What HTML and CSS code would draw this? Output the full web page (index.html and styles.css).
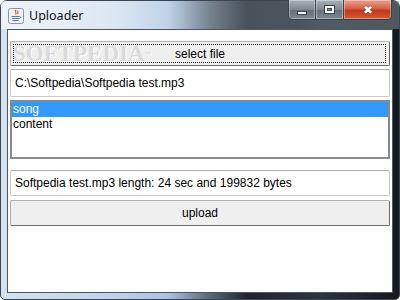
FILE: index.html
```html
<!doctype html>
<html lang="en">
<head>
<meta charset="utf-8">
<title>Uploader</title>
<link rel="stylesheet" href="styles.css">
</head>
<body>
<div class="win">
  <div class="titlebar">
    <svg class="appicon" width="16" height="16" viewBox="0 0 16 16">
      <rect x="0.5" y="0.5" width="15" height="15" rx="2" fill="#eef1f5" stroke="#8a97a8"/>
      <path d="M8 2c-2 1.5 1.5 2.5-.5 4.5M10 3c-1.2 1 .8 1.6-.4 3" stroke="#e0641c" stroke-width="1.3" fill="none"/>
      <path d="M3.5 8.5h8M4 10.5h7M4.5 12.5h6" stroke="#5577a8" stroke-width="1"/>
      <path d="M11.5 8.5c1.6 0 1.6 2-.5 2" stroke="#5577a8" fill="none"/>
    </svg>
    <span class="title">Uploader</span>
    <div class="caps">
      <div class="cap min"><span></span></div>
      <div class="cap max"><span></span></div>
      <div class="cap close">&#x2716;</div>
    </div>
  </div>
  <div class="client">
    <button class="btn focus"><span class="mark">SOFTPEDIA<sup>™</sup></span><span class="lbl">select file</span></button>
    <div class="field">C:\Softpedia\Softpedia test.mp3</div>
    <ul class="list">
      <li class="sel">song</li>
      <li>content</li>
    </ul>
    <div class="field info">Softpedia test.mp3 length: 24 sec and 199832 bytes</div>
    <button class="btn"><span class="lbl">upload</span></button>
  </div>
</div>
</body>
</html>
```

FILE: styles.css
```css
*{box-sizing:border-box}
body{margin:0;background:#fff;font-family:"Liberation Sans",Arial,sans-serif}
.win{width:400px;height:300px;display:flex;flex-direction:column;border-radius:7px 7px 5px 5px;
  background:linear-gradient(90deg,#d5e2ef 0%,#c2d5e9 25%,#a9c4e2 42%,#5d6b79 52%,#1e252d 62%,#2c343d 80%,#15191e 100%);
  border:1px solid #3c4650}
.titlebar{height:28px;display:flex;align-items:flex-start;
  background:linear-gradient(90deg,rgba(255,255,255,.6) 0%,rgba(255,255,255,.45) 30%,rgba(210,220,230,.25) 50%,rgba(120,130,140,.45) 75%,rgba(140,150,160,.5) 100%)}
.appicon{margin:7px 0 0 7px}
.title{margin:6px 0 0 5px;font-family:"Noto Sans","DejaVu Sans",sans-serif;font-size:12.5px;line-height:17px;color:#10131a}
.caps{margin-left:auto;margin-right:7px;display:flex;height:20px;margin-top:-1px;border:1px solid #3a4048;border-top:0;border-radius:0 0 5px 5px;overflow:hidden}
.cap{height:19px;display:flex;align-items:center;justify-content:center;
  background:linear-gradient(#a8b1ba,#7e8892 50%,#66707b 51%,#7d8791);border-right:1px solid #3a4048;box-shadow:inset 0 0 0 1px rgba(255,255,255,.35)}
.min{width:27px}
.max{width:28px}
.min span{width:10px;height:4px;background:#fff;border:1px solid #39414a;margin-top:6px}
.max span{width:11px;height:9px;border:1px solid #39414a;box-shadow:inset 0 0 0 2px #fff,inset 0 0 0 3px #39414a;background:#8a939c}
.close{width:47px;border-right:0;color:#fff;font-size:12px;text-shadow:0 0 1px #3a1a10,0 0 1px #3a1a10;
  background:linear-gradient(#e8a38f,#d26248 45%,#c2371c 55%,#d85a35)}
.client{flex:1;margin:0 6px 6px;background:#fff;border:1px solid #4a5866;padding:11px 2px 0;display:flex;flex-direction:column}
.btn{position:relative;height:25px;font:12px "Liberation Sans",Arial,sans-serif;color:#000;background:#efefef;
  border:1px solid #b0b0b0;border-right-color:#6a6a6a;border-bottom-color:#6a6a6a;border-radius:2px;padding:0}
.btn.focus::after{content:"";position:absolute;inset:2px 3px 2px 2px;border:1px dotted #202020}
.btn .lbl{position:relative}
.mark{position:absolute;left:2px;top:1px;font:bold 23px/22px "Liberation Serif",serif;letter-spacing:0;color:#dadada;
  text-shadow:1px 1px 0 #fff}
.mark sup{font-size:6px;vertical-align:top}
.field{height:28px;margin-top:3px;border:1px solid #c9c9c9;border-top-color:#ababab;border-radius:2px;padding:0 4px;
  font-size:12px;line-height:26px;color:#000}
.list{list-style:none;margin:3px 0 0;padding:0;height:59px;border:2px solid #858a90;font-size:12px}
.list li{height:15px;line-height:15px;padding-left:1px}
.list .sel{background:#3399ff;color:#fff}
.info{margin-top:11px;height:26px;line-height:24px}
.field.info+.btn{margin-top:4px;height:26px}
```
